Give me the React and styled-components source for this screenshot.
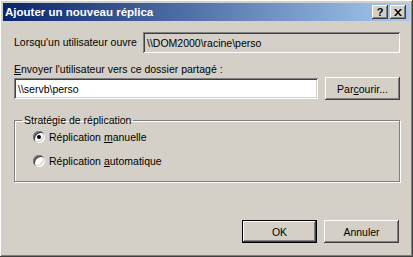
import { createGlobalStyle, styled } from 'styled-components';

const GlobalStyle = createGlobalStyle`
  html, body {
    margin: 0;
    padding: 0;
    background: #d4d0c8;
  }
  body {
    font-family: "Liberation Sans", Arial, sans-serif;
    font-size: 10.5px;
    color: #000;
  }
`

// classic 3D edges
const raised = `
  box-shadow:
    inset -1px -1px #404040,
    inset 1px 1px #ffffff,
    inset -2px -2px #808080,
    inset 2px 2px #d4d0c8;
`
const sunken = `
  box-shadow:
    inset 1px 1px #808080,
    inset -1px -1px #ffffff,
    inset 2px 2px #404040,
    inset -2px -2px #d4d0c8;
`

const Window = styled.div`
  width: 413px;
  height: 257px;
  box-sizing: border-box;
  padding: 3px;
  background: #d4d0c8;
  display: flex;
  flex-direction: column;
  ${raised}
`

const TitleBar = styled.div`
  height: 18px;
  display: flex;
  align-items: center;
  padding-left: 2px;
  background: linear-gradient(to right, #0a246a, #a6caf0);
  color: #fff;
  font-weight: 700;
  font-size: 11.5px;
`

const TitleText = styled.span`
  flex: 1;
  white-space: nowrap;
`

const CaptionButtons = styled.div`
  display: flex;
  gap: 2px;
  margin-right: 4px;
`

const CaptionButton = styled.div`
  width: 16px;
  height: 14px;
  box-sizing: border-box;
  background: #d4d0c8;
  display: flex;
  align-items: center;
  justify-content: center;
  color: #000;
  font-weight: 700;
  font-size: 11px;
  ${raised}
`

const Body = styled.div`
  flex: 1;
  display: flex;
  flex-direction: column;
  padding: 11px 10px 11px 11px;
`

const SourceRow = styled.div`
  display: grid;
  grid-template-columns: 129px 1fr;
  align-items: center;
`

const Label = styled.label`
  line-height: 13px;
  white-space: nowrap;
  margin-top: ${({ $top }) => $top || 0}px;
`

const TextBox = styled.div`
  height: 21px;
  box-sizing: border-box;
  padding: 0 4px;
  display: flex;
  align-items: center;
  background: ${({ $readOnly }) => ($readOnly ? '#d4d0c8' : '#ffffff')};
  white-space: nowrap;
  ${sunken}
`

const TargetRow = styled.div`
  display: grid;
  grid-template-columns: 304px 1fr;
  gap: 7px;
  align-items: center;
  margin-top: 1px;
`

const Button = styled.button`
  width: 75px;
  height: 23px;
  box-sizing: border-box;
  padding: 0;
  border: none;
  background: #d4d0c8;
  font: inherit;
  color: #000;
  ${({ $default }) =>
    $default
      ? `box-shadow:
          inset 1px 1px #000, inset -1px -1px #000,
          inset -2px -2px #404040, inset 2px 2px #ffffff,
          inset -3px -3px #808080;`
      : raised}
`

const GroupBox = styled.fieldset`
  margin: 14px 0 0;
  padding: 2px 7px 12px;
  border: 1px solid #808080;
  box-shadow: inset 1px 1px #ffffff, 1px 1px #ffffff;
  min-width: 0;
`

const Legend = styled.legend`
  padding: 0 2px;
  line-height: 13px;
`

const RadioList = styled.div`
  display: flex;
  flex-direction: column;
  gap: 8px;
  padding-left: 11px;
`

const RadioRow = styled.div`
  display: flex;
  align-items: center;
  gap: 4px;
  height: 16px;
`

const RadioCircle = styled.span`
  width: 12px;
  height: 12px;
  border-radius: 50%;
  background: #fff;
  display: flex;
  align-items: center;
  justify-content: center;
  ${sunken}

  &::after {
    content: '';
    width: 4px;
    height: 4px;
    border-radius: 50%;
    background: ${({ $checked }) => ($checked ? '#000' : 'transparent')};
  }
`

const Footer = styled.div`
  margin-top: auto;
  display: flex;
  justify-content: flex-end;
  gap: 7px;
  padding-right: 1px;
`

const U = styled.u`
  text-decoration: underline;
  text-underline-offset: 1px;
`

function CloseGlyph() {
  return (
    <svg width="8" height="7" viewBox="0 0 8 7">
      <path d="M0 0h2l2 2.5 2-2.5h2l-3 3.5 3 3.5h-2l-2-2.5-2 2.5h-2l3-3.5z" fill="#000" />
    </svg>
  );
}

export default function App() {
  return (
    <>
      <GlobalStyle />
      <Window>
        <TitleBar>
          <TitleText>Ajouter un nouveau réplica</TitleText>
          <CaptionButtons>
            <CaptionButton>?</CaptionButton>
            <CaptionButton>
              <CloseGlyph />
            </CaptionButton>
          </CaptionButtons>
        </TitleBar>
        <Body>
          <SourceRow>
            <Label>Lorsqu'un utilisateur ouvre</Label>
            <TextBox $readOnly>\\DOM2000\racine\perso</TextBox>
          </SourceRow>
          <Label $top={10}>
            <U>E</U>nvoyer l'utilisateur vers ce dossier partagé :
          </Label>
          <TargetRow>
            <TextBox>\\servb\perso</TextBox>
            <Button>
              Par<U>c</U>ourir...
            </Button>
          </TargetRow>
          <GroupBox>
            <Legend>Stratégie de réplication</Legend>
            <RadioList>
              <RadioRow>
                <RadioCircle $checked />
                <span>
                  Réplication <U>m</U>anuelle
                </span>
              </RadioRow>
              <RadioRow>
                <RadioCircle />
                <span>
                  Réplication <U>a</U>utomatique
                </span>
              </RadioRow>
            </RadioList>
          </GroupBox>
          <Footer>
            <Button $default>OK</Button>
            <Button>Annuler</Button>
          </Footer>
        </Body>
      </Window>
    </>
  );
}
